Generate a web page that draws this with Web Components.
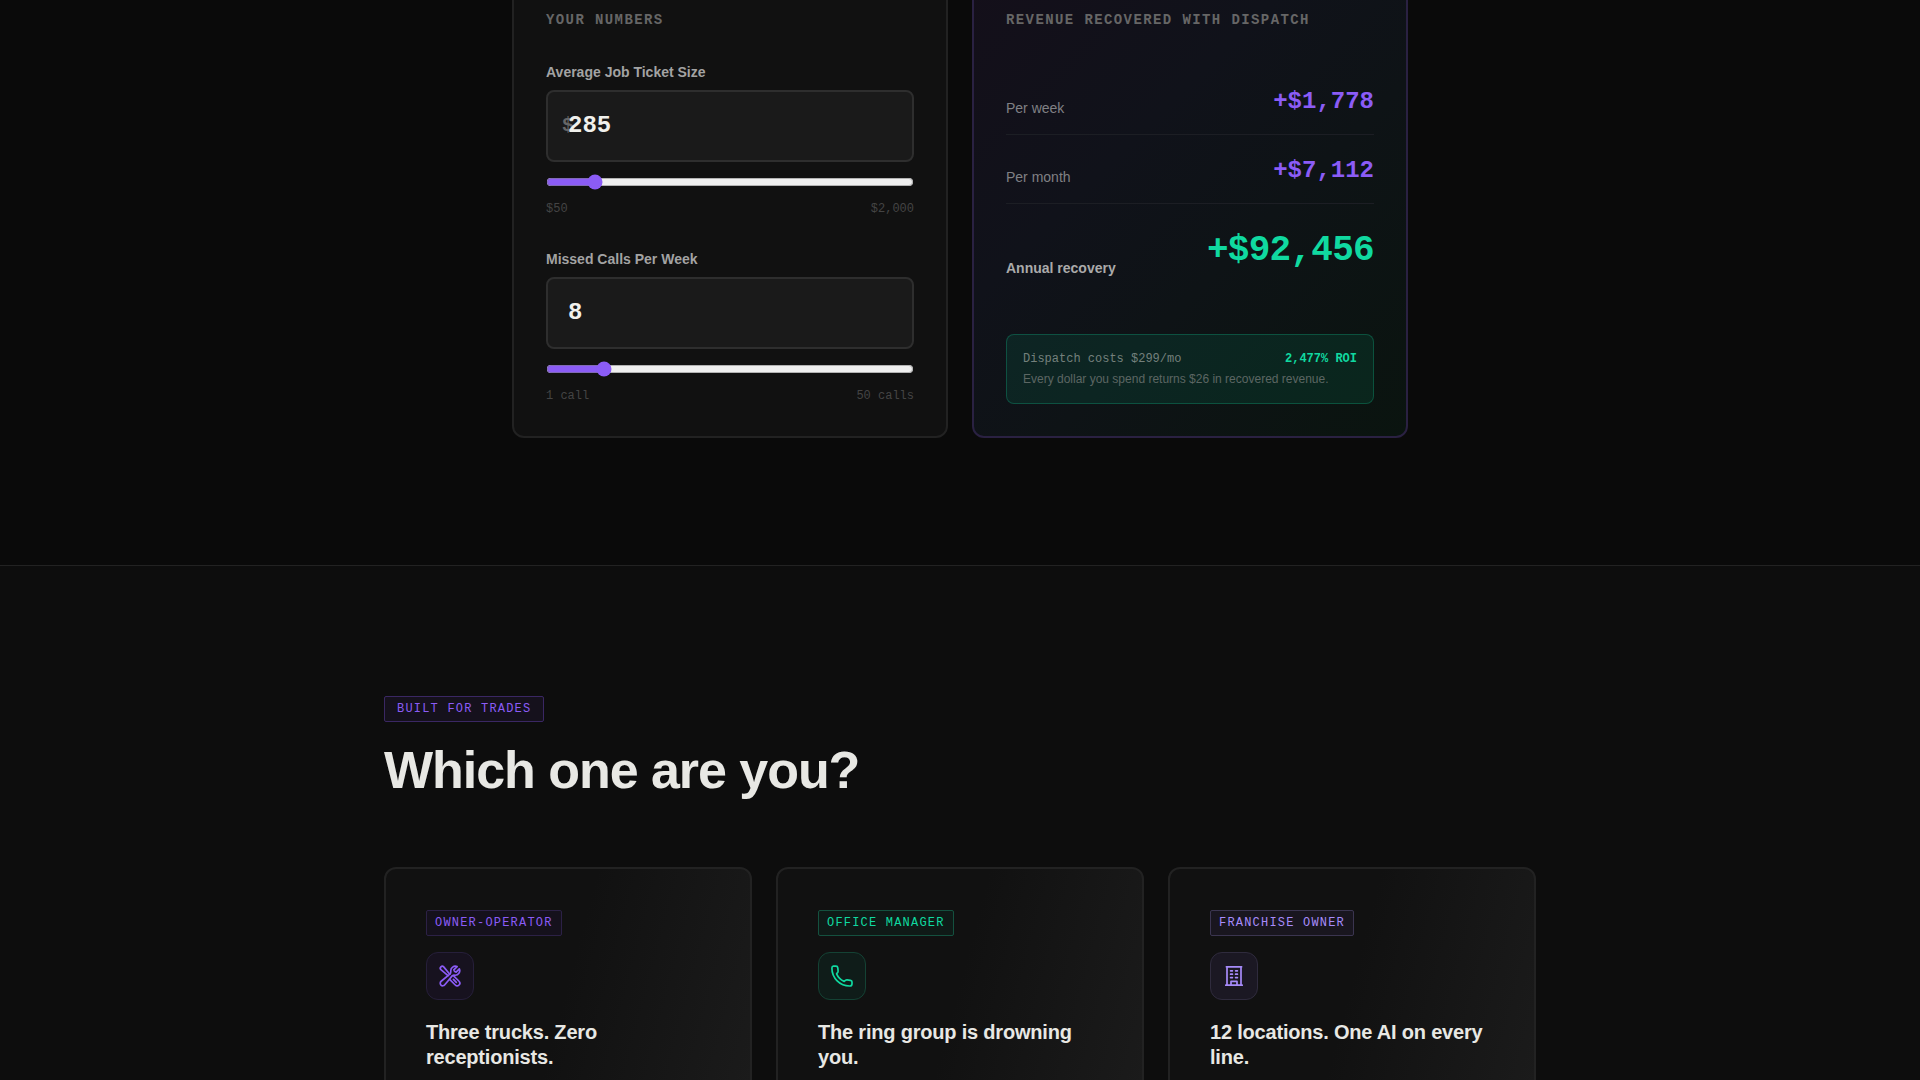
<!DOCTYPE html>
<html lang="en">
<head>
<meta charset="utf-8">
<meta name="viewport" content="width=device-width, initial-scale=1">
<title>Dispatch</title>
<style>
  html { background: #0d0d0d; }
  body {
    margin: 0;
    height: 100vh;
    overflow: hidden;
    color: #e8e8e4;
    font-family: "Liberation Sans", Arial, sans-serif;
    --mono: "Liberation Mono", "Courier New", monospace;
    --purple: #8b5cf6;
    --lilac: #a78bfa;
    --green: #10d9a0;
  }
</style>
</head>
<body>
<calculator-section>
  <panel-card heading="Your numbers">
    <number-field label="Average Job Ticket Size" prefix="$" value="285" min="50" max="2000" step="25" low="$50" high="$2,000"></number-field>
    <number-field label="Missed Calls Per Week" value="8" min="1" max="50" step="1" low="1 call" high="50 calls"></number-field>
  </panel-card>
  <panel-card heading="Revenue recovered with Dispatch" tone="accent">
    <result-list>
      <result-row label="Per week">+$1,778</result-row>
      <result-row label="Per month">+$7,112</result-row>
      <result-row label="Annual recovery" total>+$92,456</result-row>
    </result-list>
    <roi-note>
      <span slot="cost">Dispatch costs $299/mo</span>
      <span slot="roi">2,477% ROI</span>
      Every dollar you spend returns $26 in recovered revenue.
    </roi-note>
  </panel-card>
</calculator-section>

<trades-section>
  <tag-label slot="tag" wide>Built for trades</tag-label>
  <span slot="title">Which one are you?</span>
  <persona-card icon="tools" tone="purple" tag="Owner-operator">Three trucks. Zero receptionists.</persona-card>
  <persona-card icon="phone" tone="green" tag="Office manager">The ring group is drowning you.</persona-card>
  <persona-card icon="building" tone="lilac" tag="Franchise owner">12 locations. One AI on every line.</persona-card>
</trades-section>

<script>
class Base extends HTMLElement {
  connectedCallback() {
    if (this.shadowRoot) return;
    this.attachShadow({ mode: 'open' }).innerHTML =
      `<style>*{box-sizing:border-box;margin:0}:host{box-sizing:border-box}${this.css()}</style>${this.html()}`;
  }
  attr(name) { return this.getAttribute(name) || ''; }
}

customElements.define('calculator-section', class extends Base {
  css() { return `
    :host { display: block; background: #0a0a0a; margin-top: -24px; padding: 0 24px 127px; }
    .grid { display: grid; grid-template-columns: repeat(2, minmax(0, 1fr)); gap: 24px; max-width: 896px; margin: 0 auto; }`; }
  html() { return `<section class="grid"><slot></slot></section>`; }
});

customElements.define('panel-card', class extends Base {
  css() { return `
    :host { display: flex; flex-direction: column; gap: 32px; padding: 32px; border: 2px solid #222; border-radius: 12px; background: #111; }
    :host([tone="accent"]) {
      justify-content: space-between; border-color: #2a2142;
      background: linear-gradient(135deg, #140f1a 0%, #10121a 36%, #0e1316 60%, #0a140f 100%) border-box;
    }
    h3 { font: 700 14px/20px var(--mono); letter-spacing: .1em; text-transform: uppercase; color: #666; }`; }
  html() { return `<h3>${this.attr('heading')}</h3><slot></slot>`; }
});

customElements.define('number-field', class extends Base {
  css() { return `
    :host { display: flex; flex-direction: column; }
    label { font-size: 14px; line-height: 20px; font-weight: 700; color: #a3a3a3; margin-bottom: 8px; }
    .box { position: relative; height: 72px; border: 2px solid #2e2e2e; border-radius: 8px; background: #1a1a1a; }
    .prefix { position: absolute; left: 14px; top: 0; bottom: 0; display: flex; align-items: center; font: 700 20px/24px var(--mono); color: #666; }
    .box input { position: relative; width: 100%; height: 100%; padding: 0 20px 2px; border: 0; outline: 0; background: transparent; color: #f0f0ec; font: 700 24px var(--mono); }
    input[type="range"] { width: 100%; height: 16px; margin: 12px 0; accent-color: var(--purple); }
    .ends { display: flex; justify-content: space-between; font: 12px/15px var(--mono); color: #444; }`; }
  html() { return `
    <label for="value">${this.attr('label')}</label>
    <div class="box">
      ${this.attr('prefix') ? `<span class="prefix">${this.attr('prefix')}</span>` : ''}
      <input id="value" type="text" inputmode="numeric" value="${this.attr('value')}">
    </div>
    <input type="range" aria-label="${this.attr('label')}" min="${this.attr('min')}" max="${this.attr('max')}" step="${this.attr('step')}" value="${this.attr('value')}">
    <div class="ends"><span>${this.attr('low')}</span><span>${this.attr('high')}</span></div>`; }
});

customElements.define('result-list', class extends Base {
  css() { return `:host { display: block; flex: 1; padding-top: 4px; }`; }
  html() { return `<slot></slot>`; }
});

customElements.define('result-row', class extends Base {
  css() { return `
    :host { display: flex; justify-content: space-between; align-items: flex-end; padding: 20px 0 16px; border-bottom: 1px solid #1c1e24; }
    :host([total]) { border-bottom: 0; }
    .name { font-size: 14px; line-height: 20px; color: #808084; }
    .sum { font: 700 24px/32px var(--mono); color: var(--purple); }
    :host([total]) .name { font-weight: 700; color: #aaa; }
    :host([total]) .sum { font-size: 36px; line-height: 54px; letter-spacing: -.02em; color: var(--green); }`; }
  html() { return `<span class="name">${this.attr('label')}</span><span class="sum"><slot></slot></span>`; }
});

customElements.define('roi-note', class extends Base {
  css() { return `
    :host { display: flex; flex-direction: column; gap: 4px; padding: 16px; border: 1px solid rgba(16,217,160,.25); border-radius: 8px; background: rgba(0,217,150,.09); }
    .line { display: flex; justify-content: space-between; font: 12px/16px var(--mono); color: #74807c; }
    .roi { font-weight: 700; color: var(--green); }
    p { font-size: 12px; line-height: 16px; color: #5c6663; }`; }
  html() { return `
    <div class="line"><slot name="cost"></slot><span class="roi"><slot name="roi"></slot></span></div>
    <p><slot></slot></p>`; }
});

customElements.define('tag-label', class extends Base {
  css() { return `
    :host { display: inline-block; padding: 4px 8px; border: 1px solid #33234f; border-radius: 2px; background: #15111c; color: var(--purple);
      font: 12px/16px var(--mono); letter-spacing: .1em; text-transform: uppercase; }
    :host([wide]) { padding: 4px 12px; border-color: #3a2763; }
    :host([tone="purple"]) { border-color: #2c2146; }
    :host([tone="green"]) { border-color: #14513f; background: #0f1a17; color: var(--green); }
    :host([tone="lilac"]) { border-color: #3b3550; background: #19161f; color: var(--lilac); }`; }
  html() { return `<slot></slot>`; }
});

customElements.define('trades-section', class extends Base {
  css() { return `
    :host { display: block; background: #0d0d0d; border-top: 1px solid #222; padding: 130px 24px 128px; }
    .wrap { max-width: 1152px; margin: 0 auto; }
    .tag { display: flex; margin-bottom: 20px; }
    h2 { font-size: 52px; line-height: 56px; letter-spacing: -.02em; font-weight: 700; margin-bottom: 69px; }
    .grid { display: grid; grid-template-columns: repeat(3, minmax(0, 1fr)); gap: 24px; }`; }
  html() { return `
    <section class="wrap">
      <div class="tag"><slot name="tag"></slot></div>
      <h2><slot name="title"></slot></h2>
      <div class="grid"><slot></slot></div>
    </section>`; }
});

const ICONS = {
  tools: `
    <path d="M11.42 15.17 17.25 21A2.65 2.65 0 0 0 21 17.25l-5.88-5.88M11.42 15.17l2.5-3.03c.31-.38.74-.62 1.2-.77M11.42 15.17l-4.65 5.65a2.55 2.55 0 1 1-3.59-3.58l6.84-5.63M15.12 11.37c.55-.16 1.17-.19 1.75-.14a4.5 4.5 0 0 0 4.48-6.33l-3.27 3.27a3 3 0 0 1-2.25-2.25l3.27-3.27a4.5 4.5 0 0 0-6.33 4.48c.09 1.08-.07 2.27-.9 2.95l-.11.09"/>
    <path d="M10.02 11.61 2.9 5.7A1.95 1.95 0 0 1 5.7 2.9l6.06 7.27M10.02 11.61l1.74-1.44M15.4 15.4l2.9 2.9"/>`,
  phone: `<path d="M3.4 2.2H6Q7.6 2.2 7.8 3.8L8.1 6.8Q8.2 8 7.4 8.8L6.6 9.8C8 13 11 16 14.2 17.4L15.4 16.4Q16.2 15.8 17.2 15.9L20.4 16.3Q22 16.5 22 18V19.8Q21.8 21.9 20 22C10 22.2 1.8 14 1.9 4Q2 2.3 3.4 2.2Z"/>`,
  building: `<path d="M4.4 2.8H19.6M5 2.8V21.2M19 2.8V21.2M3.8 21.2H20.2M9 21.2V17.4H15V21.2M8.6 6.8H10.4M13.6 6.8H15.4M8.6 10.2H10.4M13.6 10.2H15.4M8.6 13.6H10.4M13.6 13.6H15.4"/>`
};

customElements.define('line-icon', class extends Base {
  css() { return `
    :host { display: block; width: 24px; height: 24px; }
    svg { display: block; width: 100%; height: 100%; fill: none; stroke: currentColor; stroke-width: 1.7; stroke-linecap: round; stroke-linejoin: round; }`; }
  html() { return `<svg viewBox="0 0 24 24" aria-hidden="true">${ICONS[this.attr('name')]}</svg>`; }
});

customElements.define('persona-card', class extends Base {
  css() { return `
    :host { display: flex; flex-direction: column; align-items: flex-start; min-height: 400px; padding: 41px 40px 40px; border: 2px solid #222; border-radius: 12px;
      background: linear-gradient(105deg, #111 45%, #1b1b1b 90%); }
    .icon { display: grid; place-items: center; width: 48px; height: 48px; margin: 16px 0 20px; border: 1px solid #261f3a; border-radius: 12px; background: #17121f; color: var(--purple); }
    :host([tone="green"]) .icon { border-color: #144234; background: #0f1c19; color: var(--green); }
    :host([tone="lilac"]) .icon { border-color: #2f2b3d; background: #1b1823; color: var(--lilac); }
    h3 { font-size: 20px; line-height: 25px; letter-spacing: -.01em; font-weight: 700; }`; }
  html() { return `
    <tag-label tone="${this.attr('tone')}">${this.attr('tag')}</tag-label>
    <div class="icon"><line-icon name="${this.attr('icon')}"></line-icon></div>
    <h3><slot></slot></h3>`; }
});
</script>
</body>
</html>
